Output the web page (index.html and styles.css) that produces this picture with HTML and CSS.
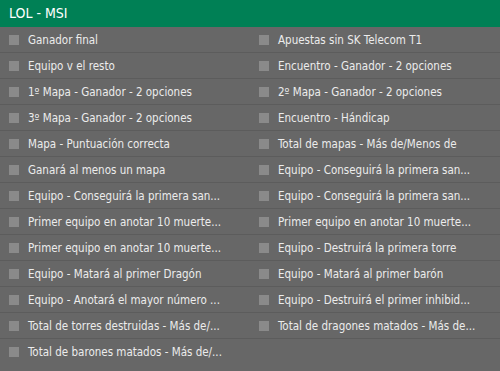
FILE: index.html
```html
<!DOCTYPE html>
<html lang="en">
<head>
    <meta charset="UTF-8">
    <title>LOL - MSI</title>
    <link rel="stylesheet" href="styles.css">
</head>
<body>
    <div class="market-group">
        <div class="group-header">LOL - MSI</div>
        <ul class="market-list">
            <li class="market"><span class="check"></span>Ganador final</li>
            <li class="market"><span class="check"></span>Apuestas sin SK Telecom T1</li>
            <li class="market"><span class="check"></span>Equipo v el resto</li>
            <li class="market"><span class="check"></span>Encuentro - Ganador - 2 opciones</li>
            <li class="market"><span class="check"></span>1º Mapa - Ganador - 2 opciones</li>
            <li class="market"><span class="check"></span>2º Mapa - Ganador - 2 opciones</li>
            <li class="market"><span class="check"></span>3º Mapa - Ganador - 2 opciones</li>
            <li class="market"><span class="check"></span>Encuentro - Hándicap</li>
            <li class="market"><span class="check"></span>Mapa - Puntuación correcta</li>
            <li class="market"><span class="check"></span>Total de mapas - Más de/Menos de</li>
            <li class="market"><span class="check"></span>Ganará al menos un mapa</li>
            <li class="market"><span class="check"></span>Equipo - Conseguirá la primera san...</li>
            <li class="market"><span class="check"></span>Equipo - Conseguirá la primera san...</li>
            <li class="market"><span class="check"></span>Equipo - Conseguirá la primera san...</li>
            <li class="market"><span class="check"></span>Primer equipo en anotar 10 muerte...</li>
            <li class="market"><span class="check"></span>Primer equipo en anotar 10 muerte...</li>
            <li class="market"><span class="check"></span>Primer equipo en anotar 10 muerte...</li>
            <li class="market"><span class="check"></span>Equipo - Destruirá la primera torre</li>
            <li class="market"><span class="check"></span>Equipo - Matará al primer Dragón</li>
            <li class="market"><span class="check"></span>Equipo - Matará al primer barón</li>
            <li class="market"><span class="check"></span>Equipo - Anotará el mayor número ...</li>
            <li class="market"><span class="check"></span>Equipo - Destruirá el primer inhibid...</li>
            <li class="market"><span class="check"></span>Total de torres destruidas - Más de/...</li>
            <li class="market"><span class="check"></span>Total de dragones matados - Más de...</li>
            <li class="market last"><span class="check"></span>Total de barones matados - Más de/...</li>
        </ul>
    </div>
</body>
</html>
```

FILE: styles.css
```css
body {
    margin: 0;
    background-color: #676767;
    font-family: "DejaVu Sans Condensed", "DejaVu Sans", sans-serif;
    font-size: 11.5px;
    overflow: hidden;
}

.group-header {
    height: 27px;
    line-height: 27px;
    padding: 0 9px;
    background-color: #008055;
    color: #ffffff;
    font-size: 14px;
}

.market-list {
    list-style: none;
    margin: 0;
    padding: 0;
    display: grid;
    grid-template-columns: 250px 250px;
}

.market {
    display: flex;
    align-items: center;
    height: 25px;
    padding-left: 9px;
    border-bottom: 1px solid #5c5c5c;
    color: #ececec;
    white-space: nowrap;
}

.market.last {
    border-bottom: none;
}

.check {
    width: 10px;
    height: 10px;
    margin-right: 9px;
    background-color: #8a8a8a;
    flex-shrink: 0;
}
```
